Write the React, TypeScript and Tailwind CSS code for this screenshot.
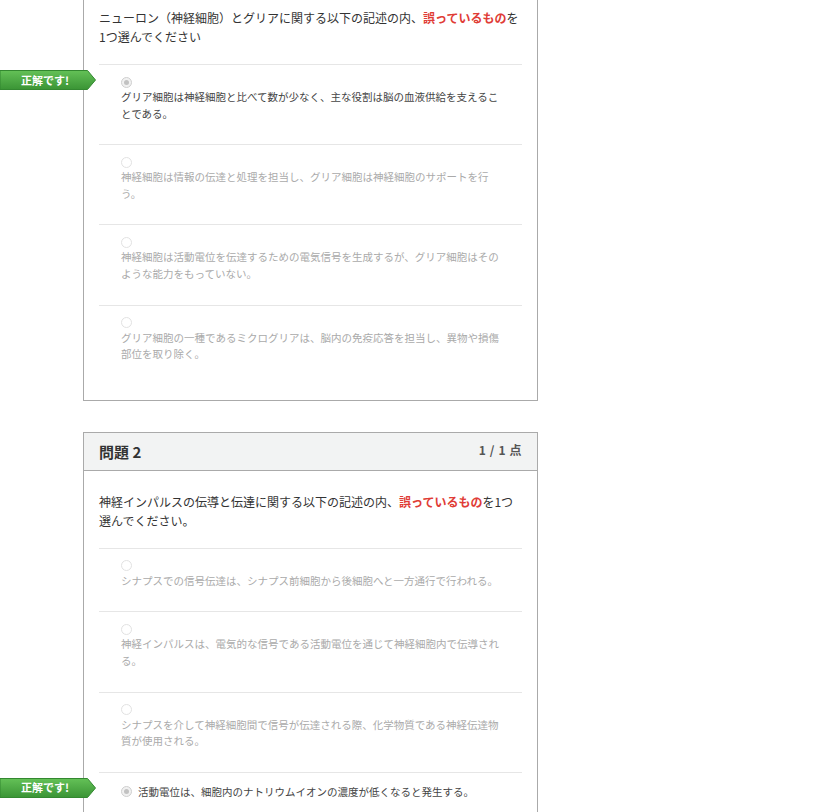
import React from 'react';

interface Choice {
  text: string;
  selected?: boolean;
  inline?: boolean;
}

const q1Choices: Choice[] = [
  { text: 'グリア細胞は神経細胞と比べて数が少なく、主な役割は脳の血液供給を支えることである。', selected: true },
  { text: '神経細胞は情報の伝達と処理を担当し、グリア細胞は神経細胞のサポートを行う。' },
  { text: '神経細胞は活動電位を伝達するための電気信号を生成するが、グリア細胞はそのような能力をもっていない。' },
  { text: 'グリア細胞の一種であるミクログリアは、脳内の免疫応答を担当し、異物や損傷部位を取り除く。' },
];

const q2Choices: Choice[] = [
  { text: 'シナプスでの信号伝達は、シナプス前細胞から後細胞へと一方通行で行われる。' },
  { text: '神経インパルスは、電気的な信号である活動電位を通じて神経細胞内で伝導される。' },
  { text: 'シナプスを介して神経細胞間で信号が伝達される際、化学物質である神経伝達物質が使用される。' },
  { text: '活動電位は、細胞内のナトリウムイオンの濃度が低くなると発生する。', selected: true, inline: true },
];

const CorrectBadge = () => (
  <div className="absolute top-[5px] left-[-99px] w-[96px] h-[20px]">
    <svg width="96" height="20" viewBox="0 0 96 20" className="absolute inset-0">
      <defs>
        <linearGradient id="badgeGreen" x1="0" y1="0" x2="0" y2="1">
          <stop offset="0" stopColor="#64c157" />
          <stop offset="1" stopColor="#3a9435" />
        </linearGradient>
      </defs>
      <path
        d="M0 0.5 H87.5 L95.5 10 L87.5 19.5 H0 Z"
        fill="url(#badgeGreen)"
        stroke="#338830"
        strokeWidth="1"
      />
    </svg>
    <div className="relative w-[90px] h-[20px] flex items-center justify-center text-white text-[11px] font-bold leading-none">
      正解です!
    </div>
  </div>
);

const Radio = ({ selected }: { selected?: boolean }) =>
  selected ? (
    <span className="w-[11px] h-[11px] rounded-full border border-[#cfcfcf] bg-[#f1f1f1] flex items-center justify-center shrink-0">
      <span className="w-[5px] h-[5px] rounded-full bg-[#c2c2c2]" />
    </span>
  ) : (
    <span className="w-[11px] h-[11px] rounded-full border border-[#e2e2e2] bg-white shrink-0" />
  );

const ChoiceRow = ({ c }: { c: Choice }) => (
  <div className="relative border-t border-[#e6e6e6] pt-[10px] pb-[22px] pl-[22px]">
    {c.selected && <CorrectBadge />}
    {c.inline ? (
      <div className="flex items-center gap-[6px] h-[17px]">
        <Radio selected />
        <span className="text-[10.5px] leading-[17px] text-[#444]">{c.text}</span>
      </div>
    ) : (
      <>
        <div className="h-[14px] flex items-center">
          <Radio selected={c.selected} />
        </div>
        <div
          className={
            c.selected
              ? 'w-[382px] text-[10.5px] leading-[16.6px] text-[#444]'
              : 'w-[382px] text-[10.5px] leading-[16.6px] text-[#aaaaaa]'
          }
        >
          {c.text}
        </div>
      </>
    )}
  </div>
);

const Prompt = ({ before, after }: { before: string; after: string }) => (
  <p className="text-[12px] leading-[19px] text-[#333] mb-[18px]">
    {before}
    <span className="font-bold text-[#e03c36]">誤っているもの</span>
    {after}
  </p>
);

export default function App() {
  return (
    <div className="min-h-screen bg-white font-['Noto_Sans_CJK_JP','Noto_Sans',sans-serif] pb-10">
      {/* question 1 (top of card scrolled out of view) */}
      <div className="ml-[83px] w-[455px] border-x border-b border-[#aaaaaa] bg-white px-[15px] pt-[8px] pb-[15px]">
        <Prompt before="ニューロン（神経細胞）とグリアに関する以下の記述の内、" after="を1つ選んでください" />
        {q1Choices.map((c, i) => (
          <ChoiceRow key={i} c={c} />
        ))}
      </div>

      {/* question 2 */}
      <div className="ml-[83px] mt-[31px] w-[455px] border border-[#aaaaaa] bg-white">
        <div className="h-[38px] bg-[#f2f3f3] border-b border-[#aaaaaa] px-[15px] pt-[8px] flex justify-between items-start">
          <span className="text-[15px] leading-[22px] font-bold text-[#333]">問題 2</span>
          <span className="text-[12px] leading-[16px] font-bold text-[#555] tracking-[0.6px] mt-[1px]">1 / 1 点</span>
        </div>
        <div className="px-[15px] pt-[21px] pb-[17px]">
          <Prompt before="神経インパルスの伝導と伝達に関する以下の記述の内、" after="を1つ選んでください。" />
          {q2Choices.map((c, i) => (
            <ChoiceRow key={i} c={c} />
          ))}
        </div>
      </div>
    </div>
  );
}
